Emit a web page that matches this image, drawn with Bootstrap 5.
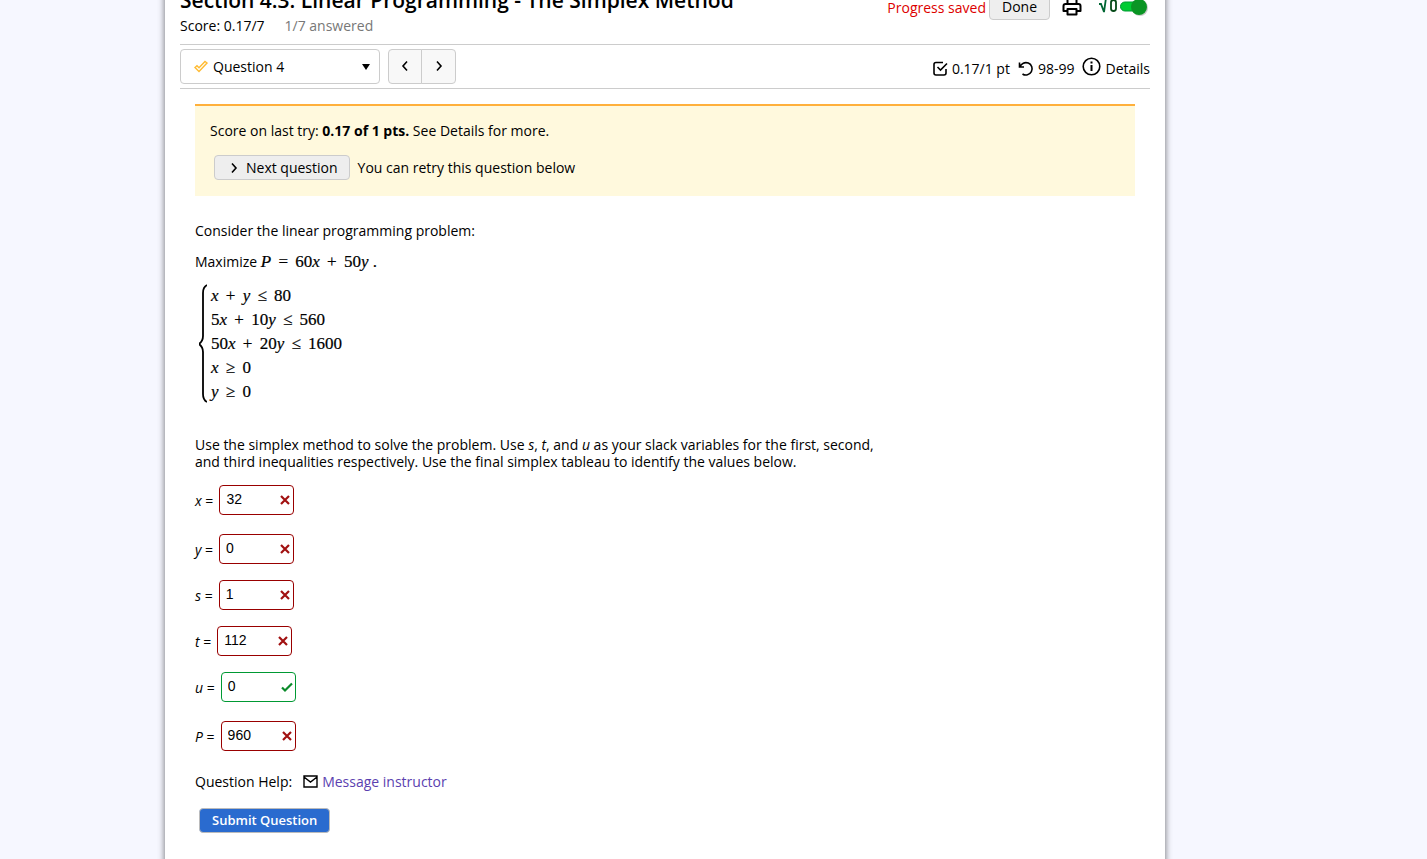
<!DOCTYPE html>
<html lang="en">
<head>
<meta charset="utf-8">
<meta name="viewport" content="width=device-width, initial-scale=1">
<title>Section 4.3: Linear Programming - The Simplex Method</title>
<link href="https://cdn.jsdelivr.net/npm/bootstrap@5.3.0/dist/css/bootstrap.min.css" rel="stylesheet">
<style>
body{background:#f6f7ff;color:#000;font:14px/17px "Open Sans","Noto Sans",sans-serif;overflow:hidden auto;scrollbar-width:none}
body::-webkit-scrollbar{display:none}
.shell{padding:0 262px 0 165px}
.sheet{background:#fff;max-width:1000px;min-height:calc(100vh + 30px);padding:0 15px 24px;box-shadow:0 0 6px 1px rgba(0,0,0,.45)}
.top-line{margin-top:-15px}
.top-line h1{font-size:21px;line-height:30px;font-weight:600;margin:0}
.tools{height:35px}
.saved{color:#d00;margin-right:3px}
.soft{background:#eee;border:1px solid #ccc;border-radius:4px;color:#000;font-size:14px;line-height:17px;padding:3px 11px}
.done{padding:3px 12px 4px}
.muted{color:#777}
.score-line{margin-top:-3px;padding:0 0 10px}
.bar{border:1px solid #ccc;border-width:1px 0;padding:4px 0}
.picker{width:200px;height:35px;border:1px solid #ccc;border-radius:4px;background:#fff;color:#000;font-size:14px;padding:0 9px 0 12px}
.step{width:34px;height:35px;background:#f8f8f8;border:1px solid #ccc;border-radius:4px}
.step+.step{border-radius:0 4px 4px 0;margin-left:-1px;width:35px}
.step:first-child{border-radius:4px 0 0 4px}
.notice{background:#fff9dd;border-top:2px solid #ffb03b;margin:15px 15px 0;padding:16px 15px;min-height:92px}
.question{padding:26px 15px 0}
.goal{padding-top:3px}
.eq,.system{font:17px/24px "Liberation Serif",serif;-webkit-text-stroke:.2px #000}
.op{margin:0 3px}
.system{margin-top:10px}
.prompt{max-width:700px;margin:32px 0 15px}
.answer{height:30px;margin-bottom:16px;gap:6px}
.answer.tall{margin-bottom:19px}
.answer input{width:75px;height:30px;border:1px solid #900;border-radius:4px;padding:0 22px 2px 6px;font:14px "Liberation Sans",sans-serif;color:#000}
.answer .right{border-color:#093}
.mark-icon{position:absolute;right:3px;top:9px}
.send{background:#2a6bcf;border:1px solid #bbb;border-radius:4px;color:#fff;font-size:13px;font-weight:600;line-height:17px;padding:3px 12px}
.help{padding-top:6px;margin-bottom:18px}
.help svg{margin:0 4px 0 11px}
.help a{color:#5b3fb0;text-decoration:none}
svg{fill:none;stroke:#000;stroke-width:1.6;flex:none}
</style>
</head>
<body>
<svg width="0" height="0" class="position-absolute">
<symbol id="cross" viewBox="0 0 12 12"><path d="M2 2l8 8M10 2l-8 8" stroke="#a11010" stroke-width="2.2"/></symbol>
<symbol id="tick" viewBox="0 0 12 12"><path d="M1 6.5l3 3L11 2.500" stroke="#0a8a2a" stroke-width="2.2"/></symbol>
</svg>
<div class="shell">
<main class="sheet">
<header class="top-line d-flex justify-content-between align-items-start">
<h1>Section 4.3: Linear Programming - The Simplex Method</h1>
<div class="tools d-flex align-items-end">
<span class="saved pb-1">Progress saved</span>
<button class="soft done">Done</button>
<button class="border-0 bg-transparent p-0 ms-2 pb-1 px-1 me-2" aria-label="Print"><svg class="d-block" width="20" height="18" viewBox="0 0 20 18"><path d="M5.500 6V1h9v5M5.500 13H1.500V8q0-2 2-2h13q2 0 2 2v5h-4M5.500 11h9v5.500h-9z" stroke-width="2" stroke-linejoin="round"/></svg></button>
<button class="border-0 bg-transparent p-0 ms-1" aria-label="Math entry"><svg class="d-block" width="52" height="26" viewBox="0 0 52 26"><path d="M1 10h2l3 8 2-14h3" stroke="#063" stroke-width="1.800"/><rect x="13" y="6" width="5" height="11" rx="2.500" stroke="#064a18" stroke-width="1.800"/><rect x="22.500" y="8" width="24" height="9" rx="4.500" fill="#0c3" stroke="#093" stroke-width="1"/><circle cx="42" cy="14" r="8" fill="#999" opacity=".5" stroke="none"/><circle cx="41" cy="13" r="8" fill="#0a9524" stroke="none"/></svg></button>
</div>
</header>
<div class="score-line d-flex"><span>Score: 0.17/7</span><span class="muted ms-3 ps-1">1/7 answered</span></div>
<nav class="bar d-flex align-items-center">
<button class="picker d-flex align-items-center"><svg class="me-1" width="16" height="14" viewBox="0 0 16 14"><path d="M2 7.500l2-1.800 2 2L12 1.500l2 1.500-8 8.500z" stroke="#fb3" stroke-width="1.400"/></svg><span>Question 4</span><svg class="ms-auto" width="8" height="6" viewBox="0 0 8 6"><path d="M0 0h8L4 6z" fill="#000" stroke="none"/></svg></button>
<div class="d-flex ms-2"><button class="step p-0 pb-1" aria-label="Previous"><svg width="8" height="12" viewBox="0 0 8 12"><path d="M6 1.500L2 6l4 4.500"/></svg></button><button class="step p-0 pb-1" aria-label="Next"><svg width="8" height="12" viewBox="0 0 8 12"><path d="M2 1.500L6 6l-4 4.500"/></svg></button></div>
<div class="ms-auto d-flex align-items-center gap-1 pt-1">
<svg width="15" height="15" viewBox="0 0 15 15"><path d="M10 1.500H3Q1 1.500 1 3.500V12q0 2 2 2h8q2 0 2-2V8M4.500 6l3 3L14 2.500"/></svg><span>0.17/1 pt</span>
<svg class="ms-1" width="16" height="16" viewBox="0 0 16 16"><path d="M1.500 1.500V6H6M2 6a6.200 6.200 0 1 1 2.500 7"/></svg><span>98-99</span>
<svg class="ms-1 mb-1" width="19" height="19" viewBox="0 0 19 19"><circle cx="9.500" cy="9.500" r="8.300"/><path d="M9.500 8v6M9.500 4.500v2" stroke-width="2"/></svg><span>Details</span>
</div>
</nav>
<section class="notice">
<p class="mb-3">Score on last try: <b>0.17 of 1 pts.</b> See Details for more.</p>
<div class="d-flex align-items-center ms-1"><button class="soft d-flex align-items-center"><svg class="ms-1 me-2" width="8" height="12" viewBox="0 0 8 12"><path d="M2 1.500L6 6l-4 4.500"/></svg>Next question</button><span class="ms-2">You can retry this question below</span></div>
</section>
<section class="question">
<p class="mb-2">Consider the linear programming problem:</p>
<p class="goal mb-0">Maximize <span class="eq"><i>P</i> <span class="op">=</span> 60<i>x</i> <span class="op">+</span> 50<i>y</i> .</span></p>
<div class="system d-flex ps-1"><svg class="me-1" width="8" height="120" viewBox="0 0 8 120"><path d="M8 1Q4 3 4 9V52Q4 57 0 60Q4 63 4 68V110Q4 116 8 118" stroke-width="1.800"/></svg><div><div><i>x</i> <span class="op">+</span> <i>y</i> <span class="op">≤</span> 80</div><div>5<i>x</i> <span class="op">+</span> 10<i>y</i> <span class="op">≤</span> 560</div><div>50<i>x</i> <span class="op">+</span> 20<i>y</i> <span class="op">≤</span> 1600</div><div><i>x</i> <span class="op">≥</span> 0</div><div><i>y</i> <span class="op">≥</span> 0</div></div></div>
<p class="prompt">Use the simplex method to solve the problem. Use <i>s</i>, <i>t</i>, and <i>u</i> as your slack variables for the first, second, and third inequalities respectively. Use the final simplex tableau to identify the values below.</p>
<div class="answer tall d-flex align-items-center"><label for="ax"><i>x</i> =</label><div class="position-relative"><input id="ax" value="32"><svg class="mark-icon" width="12" height="12"><use href="#cross"/></svg></div></div>
<div class="answer d-flex align-items-center"><label for="ay"><i>y</i> =</label><div class="position-relative"><input id="ay" value="0"><svg class="mark-icon" width="12" height="12"><use href="#cross"/></svg></div></div>
<div class="answer d-flex align-items-center"><label for="as"><i>s</i> =</label><div class="position-relative"><input id="as" value="1"><svg class="mark-icon" width="12" height="12"><use href="#cross"/></svg></div></div>
<div class="answer d-flex align-items-center"><label for="at"><i>t</i> =</label><div class="position-relative"><input id="at" value="112"><svg class="mark-icon" width="12" height="12"><use href="#cross"/></svg></div></div>
<div class="answer tall d-flex align-items-center"><label for="au"><i>u</i> =</label><div class="position-relative"><input id="au" class="right" value="0"><svg class="mark-icon" width="12" height="12"><use href="#tick"/></svg></div></div>
<div class="answer d-flex align-items-center"><label for="ap"><i>P</i> =</label><div class="position-relative"><input id="ap" value="960"><svg class="mark-icon" width="12" height="12"><use href="#cross"/></svg></div></div>
<div class="help d-flex align-items-center"><span>Question Help:</span><svg width="15" height="13" viewBox="0 0 15 13"><path d="M1 1h13v11H1zM1 2l6.500 5L14 2" stroke-width="1.400"/></svg><a href="#">Message instructor</a></div>
<button class="send ms-1">Submit Question</button>
</section>
</main>
</div>
<script src="https://cdn.jsdelivr.net/npm/bootstrap@5.3.0/dist/js/bootstrap.bundle.min.js"></script>
</body>
</html>
